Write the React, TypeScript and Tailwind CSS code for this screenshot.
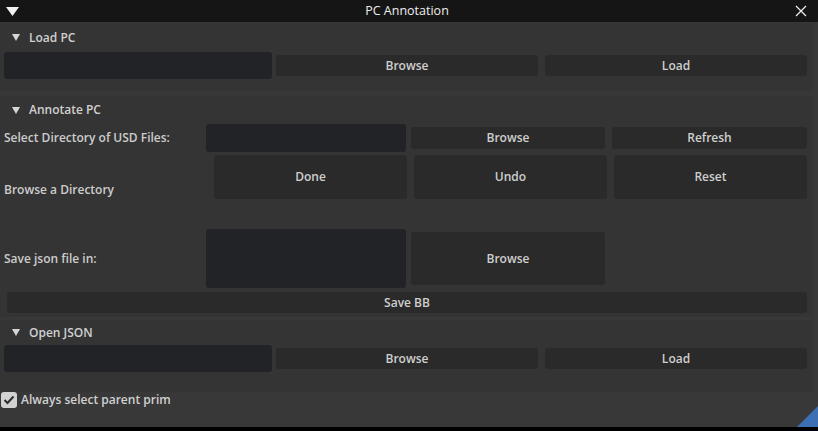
import React from 'react';

function Tri({ big = false }: { big?: boolean }) {
  return big ? (
    <svg width="13" height="9" viewBox="0 0 13 9"><polygon points="0,0 13,0 6.5,9" fill="#f2f2f2" /></svg>
  ) : (
    <svg width="8" height="7" viewBox="0 0 8 7"><polygon points="0,0 8,0 4,7" fill="#d6d6d6" /></svg>
  );
}

function Btn({ label, className = '' }: { label: string; className?: string }) {
  return (
    <div className={`bg-[#2a2a2a] rounded-[3px] flex items-center justify-center text-[#cfcfcf] ${className}`}>
      {label}
    </div>
  );
}

function Field({ className = '' }: { className?: string }) {
  return <div className={`bg-[#222327] rounded-[3px] ${className}`} />;
}

function Header({ title, className = '' }: { title: string; className?: string }) {
  return (
    <div className={`flex items-center pl-[12px] gap-[9px] text-[#d0d0d0] ${className}`}>
      <Tri />
      <span>{title}</span>
    </div>
  );
}

export default function App() {
  return (
    <div className="w-[818px] h-[431px] bg-[#383838] flex flex-col overflow-hidden font-['Open_Sans',sans-serif] font-semibold text-[12px] text-[#cccccc] relative">
      {/* title bar */}
      <div className="h-[22px] bg-[#151515] flex items-center px-[6px] shrink-0">
        <Tri big />
        <div className="flex-1 text-center text-[#eeeeee] font-medium text-[12.5px]">PC Annotation</div>
        <svg width="12" height="12" viewBox="0 0 12 12" className="mr-[5px]">
          <path d="M1 1 L11 11 M11 1 L1 11" stroke="#eeeeee" strokeWidth="1.3" />
        </svg>
      </div>

      <div className="flex flex-col w-[813px] pt-[1px]">
        {/* Load PC */}
        <div className="bg-[#343434] h-[68px] flex flex-col">
          <Header title="Load PC" className="h-[29px]" />
          <div className="flex items-center h-[27px] pl-[4px] pr-[6px]">
            <Field className="w-[268px] h-[27px]" />
            <Btn label="Browse" className="ml-[4px] w-[262px] h-[21px]" />
            <Btn label="Load" className="ml-[7px] w-[262px] h-[21px]" />
          </div>
        </div>

        {/* Annotate PC */}
        <div className="bg-[#343434] mt-[5px] h-[221px] flex flex-col">
          <Header title="Annotate PC" className="h-[28px]" />
          <div className="flex items-center h-[28px] pl-[4px] pr-[6px]">
            <div className="w-[202px]">Select Directory of USD Files:</div>
            <Field className="w-[200px] h-[28px]" />
            <Btn label="Browse" className="ml-[5px] w-[194px] h-[22px]" />
            <Btn label="Refresh" className="ml-[7px] w-[195px] h-[22px]" />
          </div>
          <div className="flex h-[70px] mt-[3px] pl-[4px] pr-[6px]">
            <div className="w-[210px] self-center">Browse a Directory</div>
            <Btn label="Done" className="w-[193px] h-[44px]" />
            <Btn label="Undo" className="ml-[7px] w-[193px] h-[44px]" />
            <Btn label="Reset" className="ml-[7px] w-[193px] h-[44px]" />
          </div>
          <div className="flex items-center h-[59px] mt-[4px] pl-[4px] pr-[6px]">
            <div className="w-[202px]">Save json file in:</div>
            <Field className="w-[200px] h-[59px]" />
            <Btn label="Browse" className="ml-[5px] w-[194px] h-[53px]" />
          </div>
          <div className="pl-[7px] pr-[6px] mt-[4px]">
            <Btn label="Save BB" className="h-[21px]" />
          </div>
        </div>

        {/* Open JSON */}
        <div className="bg-[#343434] mt-[3px] h-[72px] flex flex-col">
          <Header title="Open JSON" className="h-[25px]" />
          <div className="flex items-center h-[27px] pl-[4px] pr-[6px]">
            <Field className="w-[268px] h-[27px]" />
            <Btn label="Browse" className="ml-[4px] w-[262px] h-[21px]" />
            <Btn label="Load" className="ml-[7px] w-[262px] h-[21px]" />
          </div>
        </div>

        {/* checkbox */}
        <div className="flex items-center h-[16px] pl-[1px] gap-[4px]">
          <div className="w-[16px] h-[16px] rounded-[3px] bg-[#d2d2d2] flex items-center justify-center">
            <svg width="12" height="10" viewBox="0 0 12 10">
              <path d="M1.5 5 L4.5 8 L10.5 1.5" stroke="#2e2e2e" strokeWidth="2" fill="none" />
            </svg>
          </div>
          <span className="text-[#d0d0d0]">Always select parent prim</span>
        </div>
      </div>

      <div className="flex-1" />
      <div className="h-[4px] bg-black shrink-0" />

      {/* resize grip */}
      <svg className="absolute right-0 bottom-[4px]" width="21" height="21" viewBox="0 0 21 21">
        <polygon points="21,0 21,21 0,21" fill="#3d6fb5" />
      </svg>
    </div>
  );
}
